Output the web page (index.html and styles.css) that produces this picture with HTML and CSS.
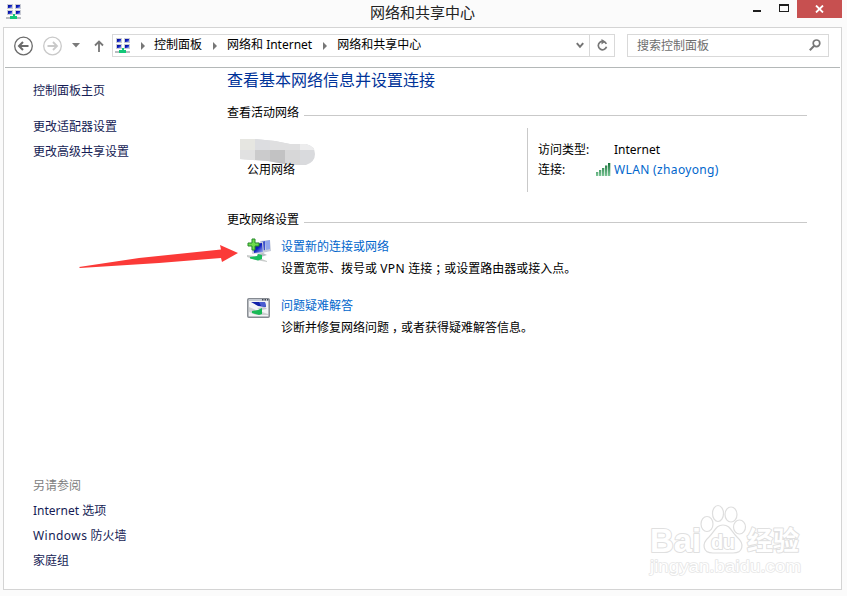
FILE: index.html
```html
<!DOCTYPE html>
<html lang="zh-CN">
<head>
  <meta charset="UTF-8" />
  <meta name="viewport" content="width=device-width, initial-scale=1.0" />
  <title>网络和共享中心</title>
  <link rel="stylesheet" href="styles.css">
</head>
<body>

  <svg class="defs" width="0" height="0">
    <defs>
      <linearGradient id="screen" x1="0" y1="0" x2="1" y2="1">
        <stop offset="0" stop-color="#000a8c" />
        <stop offset="0.5" stop-color="#1020c0" />
        <stop offset="1" stop-color="#a9bcf5" />
      </linearGradient>
      <linearGradient id="bars" x1="0" y1="0" x2="0" y2="1">
        <stop offset="0" stop-color="#17733a" />
        <stop offset="1" stop-color="#7cc596" />
      </linearGradient>
      <symbol id="network" viewBox="0 0 16 16">
        <g fill="#c9cbd3">
          <rect x="1" y="0" width="6" height="5" />
          <rect x="9" y="0" width="6" height="5" />
          <rect x="1" y="6" width="6" height="5" />
          <rect x="9" y="6" width="6" height="5" />
        </g>
        <g fill="url(#screen)">
          <rect x="2" y="1" width="4" height="3" />
          <rect x="10" y="1" width="4" height="3" />
          <rect x="2" y="7" width="4" height="3" />
          <rect x="10" y="7" width="4" height="3" />
        </g>
        <path d="M0 13h15v2H0z" fill="#b9bcc0" />
        <path d="M7 10h2v2h2v3H4v-3h3z" fill="#12c878" />
      </symbol>
    </defs>
  </svg>

  <header class="titlebar">
    <svg class="app-icon" width="16" height="16"><use href="#network" /></svg>
    <h1 class="title">网络和共享中心</h1>
    <div class="controls">
      <span class="minimize"></span>
      <span class="maximize"></span>
      <button class="close" aria-label="关闭">
        <svg width="9" height="8" viewBox="0 0 9 8"><path d="M1 .5l7 7M8 .5l-7 7" stroke="#fff" stroke-width="1.8" /></svg>
      </button>
    </div>
  </header>

  <div class="window">
    <nav class="toolbar">
      <svg class="back" width="20" height="20" viewBox="0 0 20 20" fill="none" stroke="#6b6b6b">
        <circle cx="10.5" cy="10" r="8.8" stroke-width="1.3" />
        <path d="M15.5 10h-9M10 6l-4 4 4 4" stroke-width="2" />
      </svg>
      <svg class="forward" width="20" height="20" viewBox="0 0 20 20" fill="none" stroke="#c9c9c9">
        <circle cx="10.5" cy="10" r="8.8" stroke-width="1.3" />
        <path d="M5.5 10h9M11 6l4 4-4 4" stroke-width="1.8" />
      </svg>
      <svg class="history" width="8" height="5" viewBox="0 0 8 5"><path d="M0 0h8L4 4.5z" fill="#7a7a7a" /></svg>
      <svg class="up" width="10" height="12" viewBox="0 0 10 12" fill="none" stroke="#777" stroke-width="1.8"><path d="M5 12V1.5M1 5.500l4-4 4 4" /></svg>

      <div class="address">
        <svg width="16" height="16"><use href="#network" /></svg>
        <span class="chevron first"></span>
        <span>控制面板</span>
        <span class="chevron"></span>
        <span>网络和 Internet</span>
        <span class="chevron"></span>
        <span>网络和共享中心</span>
        <svg class="drop" width="8" height="7" viewBox="0 0 8 7"><path d="M.8 1.200L4 4.800l3.200-3.600" fill="none" stroke="#747474" stroke-width="2" /></svg>
        <span class="refresh">
          <svg width="11" height="12" viewBox="0 0 11 12"><path d="M8.300 3.400A4.200 4.200 0 1 0 9.700 6" fill="none" stroke="#777" stroke-width="1.700" transform="rotate(25 5.500 6.500)" /><path d="M4.500 0v5.400L8.500 2.500z" fill="#777" /></svg>
        </span>
      </div>

      <div class="search">
        <span>搜索控制面板</span>
        <svg width="12" height="12" viewBox="0 0 12 12" fill="none" stroke="#777"><circle cx="7.500" cy="4.300" r="3.300" stroke-width="1.700" /><path d="M5.200 6.800L.8 11.200" stroke-width="2" /></svg>
      </div>
    </nav>

    <div class="content">
      <aside class="sidebar">
        <a class="home">控制面板主页</a>
        <a>更改适配器设置</a>
        <a>更改高级共享设置</a>
        <div class="see-also">
          <span class="label">另请参阅</span>
          <a>Internet 选项</a>
          <a><span class="wide">Windows</span> 防火墙</a>
          <a>家庭组</a>
        </div>
      </aside>

      <main class="main">
        <h2>查看基本网络信息并设置连接</h2>

        <h3 class="section">查看活动网络</h3>
        <div class="active-network">
          <div class="network-name">
            <svg class="smudge" width="75" height="26" viewBox="0 0 75 26">
              <clipPath id="brush"><path d="M0 0L15 0L35 2L50 5H66Q75 7 75 15T66 26H50L28 22L0 20z" /></clipPath>
              <g clip-path="url(#brush)">
                <rect width="75" height="26" fill="#d9dadd" />
                <rect width="15" height="11" fill="#e6e6e1" />
                <rect x="15" width="15" height="11" fill="#dcdde0" />
                <rect x="30" width="30" height="11" fill="#dfdfe0" />
                <rect x="60" width="15" height="11" fill="#ececed" />
                <rect y="11" width="15" height="15" fill="#e1e1e1" />
                <rect x="15" y="11" width="15" height="15" fill="#cbcbcc" />
                <rect x="30" y="11" width="15" height="15" fill="#c2c2c3" />
                <rect x="45" y="11" width="15" height="15" fill="#d7d7d8" />
              </g>
            </svg>
            <span class="network-type">公用网络</span>
          </div>
          <dl class="details">
            <dt>访问类型:</dt>
            <dd>Internet</dd>
            <dt>连接:</dt>
            <dd>
              <svg class="signal" width="15" height="13" viewBox="0 0 15 13" fill="url(#bars)">
                <path d="M0 9h2.300v4H0zM3 7h2.300v6H3zM6 5h2.300v8H6zM9 2.500h2.300V13H9zM12 0h2.300v13H12z" />
              </svg>
              <a class="wlan">WLAN (zhaoyong)</a>
            </dd>
          </dl>
        </div>

        <h3 class="section change">更改网络设置</h3>
        <ul class="tasks">
          <li>
            <svg class="task-icon" width="25" height="26" viewBox="0 0 25 26">
              <path d="M13 3l10-1 1 11-9 2z" fill="#c7ccda" />
              <path d="M14 4l4-1v9l-3 1z" fill="#3c50cc" />
              <path d="M18 3l5-1v9l-4 1z" fill="#91a5ec" />
              <path d="M4 5l12-1 1 11-12 1z" fill="#d0d3dc" />
              <path d="M6 6l9-1 1 9-9 1z" fill="url(#screen)" />
              <path d="M10 16l6-1 4 2-6 2z" fill="#b7bbc2" />
              <path d="M0 17l7 1 13 5v1L9 22 0 19z" fill="#c9cccb" />
              <path d="M3 19l7-1 1-2 4 1v4l-4 1.500-8-2z" fill="#18bd5c" />
              <path d="M5 1h3v4h4v3H8v4H5V8H1V5h4z" fill="#6fdc4c" stroke="#27892b" />
            </svg>
            <div>
              <a>设置新的连接或网络</a>
              <p>设置宽带、拨号或 <span class="wide">VPN</span> 连接<span class="punct">；</span>或设置路由器或接入点。</p>
            </div>
          </li>
          <li>
            <svg class="task-icon" width="25" height="26" viewBox="0 0 25 26">
              <rect x=".8" y="1.800" width="21.400" height="18.400" rx="1" fill="#f3f4f6" stroke="#858a91" stroke-width="1.500" />
              <path d="M2 2h20v2H2z" fill="#c3c8d0" />
              <path d="M15 2h1.500v1.500H15zM17.500 2H19v1.500h-1.500zM20 2h1.500v1.500H20z" fill="#454a55" />
              <path d="M4 5h14l1 5-8-1z" fill="#1020a8" />
              <path d="M12 5h6l1 5-5-1z" fill="#4a5cd0" />
              <path d="M10 11l8-1 2 2-6 1z" fill="#c6c9cf" />
              <path d="M2 10l7 3 12 4v1L9 18l-7-3z" fill="#cdd0d1" />
              <path d="M5 14l6-1 4-2v6l-3 1-7-2z" fill="#18b955" />
            </svg>
            <div>
              <a>问题疑难解答</a>
              <p>诊断并修复网络问题<span class="punct">，</span>或者获得疑难解答信息。</p>
            </div>
          </li>
        </ul>
      </main>
    </div>
  </div>

  <svg class="arrow" width="160" height="24" viewBox="0 0 160 24">
    <path d="M0 23l60-9 82-8.500-1-4.500 18 8-16 9-1-4-62 5L1 24z" fill="#fb3a38" />
  </svg>

  <svg class="watermark" width="160" height="80" viewBox="0 0 160 80">
    <g fill="#fff" stroke="#dedede" stroke-width="1.200">
      <ellipse cx="62" cy="22" rx="6" ry="7.500" />
      <ellipse cx="73" cy="11.500" rx="5.500" ry="8" />
      <ellipse cx="86" cy="12.500" rx="6" ry="7.500" />
      <ellipse cx="94.500" cy="25" rx="6" ry="7" />
      <path d="M78 23c-7 0-8 6-14 12-8 7-6 16 4 16h20c10 0 12-9 4-16-6-6-7-12-14-12z" />
    </g>
    <g class="mark-text">
      <text x="5" y="50" font-size="34" textLength="51" lengthAdjust="spacingAndGlyphs" class="latin">Bai</text>
      <text x="66" y="47" font-size="20" textLength="24" class="latin">du</text>
      <text x="102" y="48" font-size="26" textLength="52" class="cjk">经验</text>
      <text x="5" y="70" font-size="17" textLength="151" lengthAdjust="spacingAndGlyphs" class="url">jingyan.baidu.com</text>
    </g>
  </svg>

</body>
</html>
```
FILE: styles.css
```css
*, *::before, *::after {
  box-sizing: border-box;
}

body {
  margin: 0;
  height: 596px;
  position: relative;
  overflow: hidden;
  background: #fbfbfb;
  color: #000;
  font-family: "Noto Sans", "Noto Sans CJK SC", sans-serif;
  font-size: 12px;
}

h1, h2, h3, p, ul, dl, dd {
  margin: 0;
  padding: 0;
  font-weight: normal;
}

svg {
  display: block;
  flex: none;
}

.defs {
  position: absolute;
}

.titlebar {
  height: 27px;
  display: grid;
  grid-template-columns: 150px 1fr 150px;
}

.app-icon {
  margin: 4px 0 0 6px;
}

.title {
  font-size: 15px;
  line-height: 24px;
  text-align: center;
  color: #222;
  margin-right: 2px;
}

.controls {
  display: flex;
  justify-content: flex-end;
  padding-right: 5px;
}

.minimize {
  width: 8px;
  height: 2px;
  margin: 10px 18px 0 0;
  background: #1e1e1e;
}

.maximize {
  width: 10px;
  height: 8px;
  margin: 4px 8px 0 0;
  border: 1px solid #1e1e1e;
  border-top-width: 2px;
}

.close {
  width: 45px;
  height: 18px;
  padding: 0;
  border: 0;
  background: #c75050;
  display: flex;
  align-items: center;
  justify-content: center;
}

.window {
  width: 839px;
  height: 563px;
  margin-left: 3px;
  border: 1px solid #d4d4d4;
  background: #fff;
  display: flex;
  flex-direction: column;
}

.toolbar {
  height: 40px;
  margin: 0 1px;
  padding: 6px 11px 10px 8px;
  border-bottom: 1px solid #b4b8b8;
  display: flex;
  align-items: center;
}

.forward {
  margin-left: 9px;
}

.history {
  margin-left: 10px;
}

.up {
  margin: 0 8px 0 14px;
}

.address {
  width: 503px;
  height: 23px;
  padding-left: 2px;
  border: 1px solid #d9d9d9;
  display: flex;
  align-items: center;
  line-height: 17px;
  white-space: nowrap;
}

.address > span {
  padding-bottom: 2px;
}

.chevron {
  width: 25px;
  display: flex;
  justify-content: center;
}

.address > .chevron {
  padding-bottom: 0;
}

.first {
  width: 23px;
}

.chevron::before {
  content: "";
  border: 4px solid transparent;
  border-left-color: #777;
  border-right: 0;
}

.drop {
  margin: 0 5px 0 auto;
}

.refresh {
  width: 25px;
  height: 21px;
  border-left: 1px solid #d9d9d9;
  display: flex;
  align-items: center;
  justify-content: center;
}

.search {
  width: 202px;
  height: 23px;
  margin-left: 12px;
  padding: 0 7px 1px 9px;
  border: 1px solid #d9d9d9;
  color: #6d6d6d;
  display: flex;
  align-items: center;
  justify-content: space-between;
}

.content {
  flex: 1;
  display: flex;
}

.sidebar {
  width: 223px;
  padding: 10px 0 16px 29px;
  display: flex;
  flex-direction: column;
  line-height: 25px;
  color: #151c55;
}

.home {
  margin-bottom: 11px;
}

.see-also {
  margin-top: auto;
  display: flex;
  flex-direction: column;
}

.label {
  color: #808080;
}

.wide {
  letter-spacing: 0.45px;
}

.main {
  width: 580px;
}

.main a {
  color: #0066cc;
}

.main h2 {
  font-size: 16px;
  line-height: 24px;
  color: #003399;
}

.section {
  margin-top: 12px;
  font-size: 12px;
  line-height: 18px;
  display: flex;
  align-items: center;
}

.section::after {
  content: "";
  flex: 1;
  height: 1px;
  margin: 5px 0 0 5px;
  background: #c9c9c9;
}

.change {
  margin-top: 19px;
}

.active-network {
  height: 64px;
  margin-top: 6px;
  display: flex;
  line-height: 20px;
}

.network-name {
  width: 300px;
  padding: 32px 0 0 20px;
  position: relative;
}

.network-type {
  position: relative;
}

.smudge {
  position: absolute;
  left: 13px;
  top: 11px;
}

.details {
  flex: 1;
  padding: 12px 0 0 10px;
  border-left: 1px solid #c9c9c9;
  display: grid;
  grid-template-columns: 58px 1fr;
  grid-auto-rows: 20px;
}

.details dd {
  padding-left: 18px;
  display: flex;
  align-items: center;
}

.signal {
  margin: 0 3px 1px -18px;
}

.wlan {
  letter-spacing: 0.35px;
}

.tasks {
  margin-top: 7px;
  padding-left: 20px;
  list-style: none;
  line-height: 22px;
}

.tasks li {
  display: flex;
  gap: 9px;
  height: 44px;
  margin-bottom: 15px;
  white-space: nowrap;
}

.task-icon {
  margin-top: 2px;
}

.punct {
  display: inline-block;
  width: 12px;
  padding-left: 3px;
  text-indent: 0;
}

.arrow {
  position: absolute;
  left: 79px;
  top: 244px;
}

.watermark {
  position: absolute;
  left: 645px;
  top: 502px;
}

.mark-text {
  fill: #fff;
  stroke: #e0e0e0;
  stroke-width: 2px;
  stroke-linejoin: round;
  paint-order: stroke;
  font-weight: bold;
}

.latin {
  font-family: "Liberation Sans", sans-serif;
}

.cjk {
  font-family: "Noto Sans CJK SC", sans-serif;
}

.url {
  font-family: "Liberation Sans", sans-serif;
  font-weight: normal;
  stroke: #e6e6e6;
  stroke-width: 1.5px;
}
```
